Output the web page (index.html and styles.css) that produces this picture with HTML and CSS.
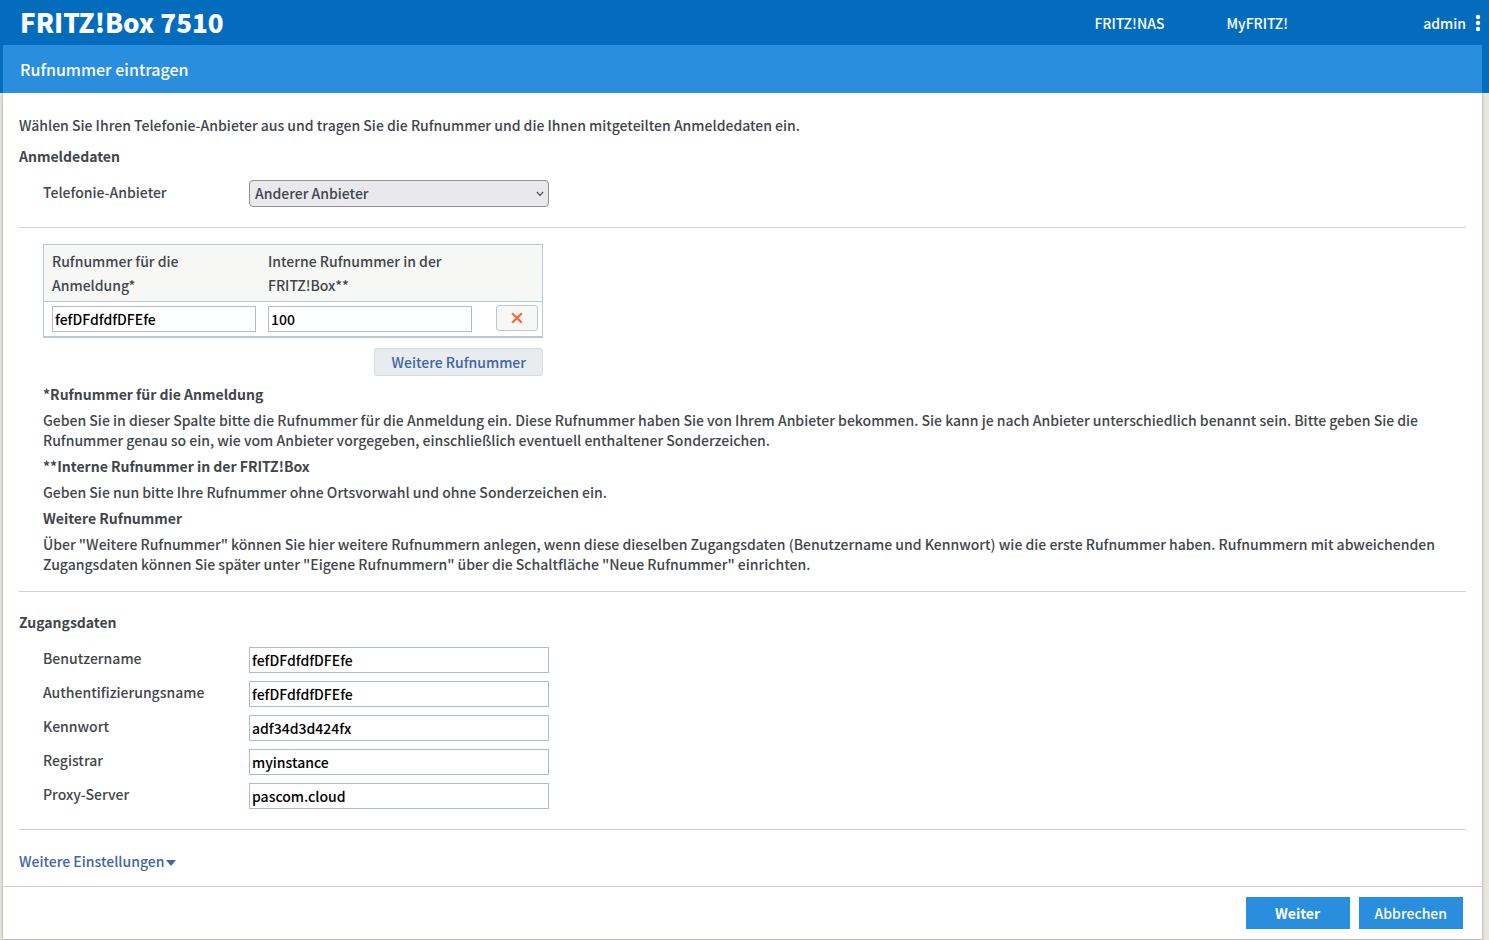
FILE: index.html
```
<!DOCTYPE html>
<html lang="de">
<head>
<meta charset="utf-8">
<title>FRITZ!Box 7510</title>
<link rel="stylesheet" href="styles.css">
</head>
<body>
<header class="topbar">
  <h1 class="brand">FRITZ!Box 7510</h1>
  <nav class="topnav">
    <a href="#">FRITZ!NAS</a>
    <a href="#">MyFRITZ!</a>
  </nav>
  <button type="button" class="user">admin
    <svg width="6" height="18" viewBox="0 0 6 18" aria-hidden="true"><circle cx="3" cy="3" r="2.2"/><circle cx="3" cy="9" r="2.2"/><circle cx="3" cy="15" r="2.2"/></svg>
  </button>
</header>
<div class="titleband"><h2 class="title">Rufnummer eintragen</h2></div>
<form class="page">
  <main class="content">
    <p>Wählen Sie Ihren Telefonie-Anbieter aus und tragen Sie die Rufnummer und die Ihnen mitgeteilten Anmeldedaten ein.</p>
    <h3 class="section">Anmeldedaten</h3>
    <div class="fields">
      <div class="row">
        <label for="provider">Telefonie-Anbieter</label>
        <span class="picker">
          <select id="provider"><option>Anderer Anbieter</option></select>
          <svg class="chevron" width="8" height="6" viewBox="0 0 8 6" aria-hidden="true"><path d="M.8 .9l3.200 3.400 3.200-3.400"/></svg>
        </span>
      </div>
    </div>
    <hr>
    <div class="numbers">
      <table>
        <thead>
          <tr><th id="c1">Rufnummer für die<br>Anmeldung*</th><th id="c2">Interne Rufnummer in der<br>FRITZ!Box**</th><td></td></tr>
        </thead>
        <tbody>
          <tr>
            <td><input type="text" aria-labelledby="c1" value="fefDFdfdfDFEfe"></td>
            <td><input type="text" aria-labelledby="c2" value="100"></td>
            <td class="action"><button type="button" class="remove" aria-label="Löschen"><svg width="12" height="12" viewBox="0 0 12 12" aria-hidden="true"><path d="M1.2 1.2l9.6 9.6M10.8 1.2l-9.6 9.6"/></svg></button></td>
          </tr>
        </tbody>
      </table>
      <button type="button" class="add">Weitere Rufnummer</button>
    </div>
    <div class="help">
      <h4>*Rufnummer für die Anmeldung</h4>
      <p>Geben Sie in dieser Spalte bitte die Rufnummer für die Anmeldung ein. Diese Rufnummer haben Sie von Ihrem Anbieter bekommen. Sie kann je nach Anbieter unterschiedlich benannt sein. Bitte geben Sie die Rufnummer genau so ein, wie vom Anbieter vorgegeben, einschließlich eventuell enthaltener Sonderzeichen.</p>
      <h4>**Interne Rufnummer in der FRITZ!Box</h4>
      <p>Geben Sie nun bitte Ihre Rufnummer ohne Ortsvorwahl und ohne Sonderzeichen ein.</p>
      <h4>Weitere Rufnummer</h4>
      <p>Über "Weitere Rufnummer" können Sie hier weitere Rufnummern anlegen, wenn diese dieselben Zugangsdaten (Benutzername und Kennwort) wie die erste Rufnummer haben. Rufnummern mit abweichenden Zugangsdaten können Sie später unter "Eigene Rufnummern" über die Schaltfläche "Neue Rufnummer" einrichten.</p>
    </div>
    <hr>
    <h3 class="section access">Zugangsdaten</h3>
    <div class="fields credentials">
      <div class="row"><label for="user">Benutzername</label><input type="text" id="user" value="fefDFdfdfDFEfe"></div>
      <div class="row"><label for="auth">Authentifizierungsname</label><input type="text" id="auth" value="fefDFdfdfDFEfe"></div>
      <div class="row"><label for="pass">Kennwort</label><input type="text" id="pass" value="adf34d3d424fx"></div>
      <div class="row"><label for="registrar">Registrar</label><input type="text" id="registrar" value="myinstance"></div>
      <div class="row"><label for="proxy">Proxy-Server</label><input type="text" id="proxy" value="pascom.cloud"></div>
    </div>
    <hr>
    <a class="more" href="#">Weitere Einstellungen<svg width="10" height="6" viewBox="0 0 10 6" aria-hidden="true"><path d="M0 0h10L5 6z"/></svg></a>
  </main>
  <footer class="actions">
    <button type="submit" class="primary strong">Weiter</button>
    <button type="button" class="primary">Abbrechen</button>
  </footer>
</form>
</body>
</html>
```
FILE: styles.css
```
* { box-sizing: border-box; }
body {
  margin: 0;
  background: #e9e6df;
  color: #3f464c;
  font: 500 14px/20px "Noto Sans CJK SC", "Open Sans", sans-serif;
}
h1, h2, h3, h4, p { margin: 0; font-size: inherit; }
button, input, select { font: inherit; }
button { cursor: pointer; }
a { text-decoration: none; }

.topbar {
  display: flex;
  align-items: center;
  height: 45px;
  padding: 0 8px 0 20px;
  background: #046cbd;
  color: #fff;
}
.brand { flex: 1; padding-bottom: 2px; font: 900 26px/32px "Noto Sans CJK SC", sans-serif; }
.topnav { display: flex; gap: 62px; margin-right: 135px; }
.topnav a { color: inherit; }
.user {
  display: flex;
  align-items: center;
  gap: 9px;
  padding: 0;
  border: 0;
  background: none;
  color: inherit;
}
.user svg { fill: #fff; }

.titleband { padding: 0 7px 0 3px; background: #046cbd; }
.title {
  padding: 12px 17px;
  background: #298edd;
  color: #fff;
  font-size: 16px;
  line-height: 24px;
  font-weight: 500;
}

.page {
  margin: 0 7px 1px 3px;
  background: #fff;
  box-shadow: 0 1px 3px #9d9a92;
}
.content { padding: 22px 16px 15px; }
.section { margin-top: 11px; font-weight: bold; }
.section.access { margin-top: 20px; }
.fields { display: grid; gap: 8px; margin: 14px 0 20px 24px; }
.row { display: grid; grid-template-columns: 206px 300px; }
.row label { line-height: 24px; }
.credentials { margin-top: 15px; }
.credentials label { line-height: 22px; }
hr { margin: 0; border: 0; border-top: 1px solid #cfd2d3; }

input {
  width: 100%;
  height: 26px;
  padding: 0 2px 1px;
  border: 1px solid #aebcc5;
  background: #fff;
  color: #000;
}
.picker { position: relative; display: block; }
.picker select {
  display: block;
  width: 100%;
  height: 27px;
  padding: 0 5px 2px;
  border: 1px solid #8f8f9d;
  border-radius: 4px;
  background: #e9e9ed;
  color: #3f464c;
  appearance: none;
}
.chevron {
  position: absolute;
  right: 5px;
  top: 11px;
  fill: none;
  stroke: #3f464c;
  stroke-width: 1.2;
  pointer-events: none;
}

.numbers {
  display: flex;
  flex-direction: column;
  align-items: flex-end;
  gap: 10px;
  width: 500px;
  margin: 16px 0 0 24px;
}
table {
  width: 100%;
  table-layout: fixed;
  border: 1px solid #b9c9d3;
  border-bottom-width: 2px;
  border-spacing: 0;
}
th, thead td {
  padding: 4px 4px 4px 8px;
  border-bottom: 1px solid #b9c9d3;
  background: #f7f7f5;
  font-weight: 500;
  line-height: 24px;
  text-align: left;
}
th { width: 216px; }
tbody td { padding: 4px 4px 4px 8px; vertical-align: top; }
tbody input { display: block; }
tbody .action { padding: 3px 4px 0 0; }
.remove {
  display: flex;
  align-items: center;
  justify-content: center;
  width: 42px;
  height: 26px;
  margin-left: auto;
  padding: 0;
  border: 1px solid #b9c9d3;
  border-radius: 3px;
  background: #f7f7f5;
}
.remove svg { fill: none; stroke: #ff6540; stroke-width: 2.2; }
.add {
  height: 28px;
  padding: 0 16px;
  border: 1px solid #d5dde1;
  border-radius: 3px;
  background: #e8ecef;
  color: #3f65a3;
}

.help { display: grid; gap: 6px; margin: 8px 0 17px 24px; }

.more { display: inline-flex; align-items: center; gap: 2px; margin-top: 21px; color: #3f65a3; }
.more svg { margin-top: 3px; fill: #3f65a3; }

.actions {
  display: flex;
  justify-content: flex-end;
  gap: 9px;
  padding: 10px 19px;
  border-top: 1px solid #cfd2d3;
}
.primary {
  min-width: 104px;
  height: 32px;
  padding: 0 16px;
  border: 0;
  background: #298edd;
  color: #fff;
}
.strong { font-weight: bold; }
```
